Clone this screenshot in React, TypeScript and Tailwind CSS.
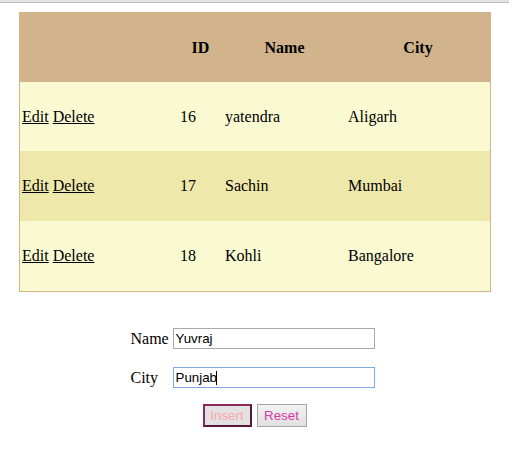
import React from 'react';

interface Person {
  id: number;
  name: string;
  city: string;
}

const people: Person[] = [
  { id: 16, name: 'yatendra', city: 'Aligarh' },
  { id: 17, name: 'Sachin', city: 'Mumbai' },
  { id: 18, name: 'Kohli', city: 'Bangalore' },
];

// column widths: actions | id | name | city
const cols = 'grid grid-cols-[158px_45px_123px_144px]';

const App: React.FC = () => {
  return (
    <div className="min-h-[452px] bg-white font-['Liberation_Serif',serif] text-[16px] text-black">
      {/* browser chrome strip */}
      <div className="h-[2px] bg-[#e4e4e4]" />
      <div className="h-px bg-[#bdbdbd]" />

      <div className="ml-[19px] mt-[9px] w-[472px] border border-[#d2b48c]">
        <div className={`${cols} h-[69px] items-center bg-[#d2b48c] font-bold`}>
          <div />
          <div className="text-center">ID</div>
          <div className="text-center">Name</div>
          <div className="text-center">City</div>
        </div>
        {people.map((p, i) => (
          <div
            key={p.id}
            className={`${cols} items-center ${i === 0 ? 'h-[69px]' : 'h-[70px]'} ${
              i % 2 === 1 ? 'bg-[#eee8aa]' : 'bg-[#fafad2]'
            }`}
          >
            <div className="pl-[2px]">
              <a href="#" className="underline">Edit</a>{' '}
              <a href="#" className="underline">Delete</a>
            </div>
            <div className="pl-[2px]">{p.id}</div>
            <div className="pl-[2px]">{p.name}</div>
            <div className="pl-[2px]">{p.city}</div>
          </div>
        ))}
      </div>

      <div className="mt-[36px] flex flex-col items-center">
        <div className="mr-[4px] grid grid-cols-[38px_202px] items-center gap-x-[4px] gap-y-[18px]">
          <label className="leading-[21px]">Name</label>
          <input
            defaultValue="Yuvraj"
            className="block h-[21px] w-[202px] border border-[#a9a9a9] bg-white px-[2px] font-['Liberation_Sans',sans-serif] text-[13.33px] outline-none"
          />
          <label className="leading-[21px]">City</label>
          <div className="relative h-[21px]">
            <input
              defaultValue="Punjab"
              className="block h-[21px] w-[202px] border border-[#7eaaea] bg-white px-[2px] font-['Liberation_Sans',sans-serif] text-[13.33px] outline-none"
            />
            <span className="absolute left-[43px] top-[4px] h-[14px] w-px bg-black" />
          </div>
        </div>

        <div className="mt-[16px] flex gap-[5px] font-['Liberation_Sans',sans-serif] text-[13.33px]">
          <button className="h-[23px] w-[49px] border-2 border-[#8a2a5c] border-r-[#5a1838] border-b-[#5a1838] bg-[#e2e2e2] text-[#ffa3ad]">
            Insert
          </button>
          <button className="h-[23px] w-[50px] border border-[#a6a6a6] bg-gradient-to-b from-[#f2f2f2] to-[#e0e0e0] text-[#d63aa8]">
            Reset
          </button>
        </div>
      </div>
    </div>
  );
};

export default App;
